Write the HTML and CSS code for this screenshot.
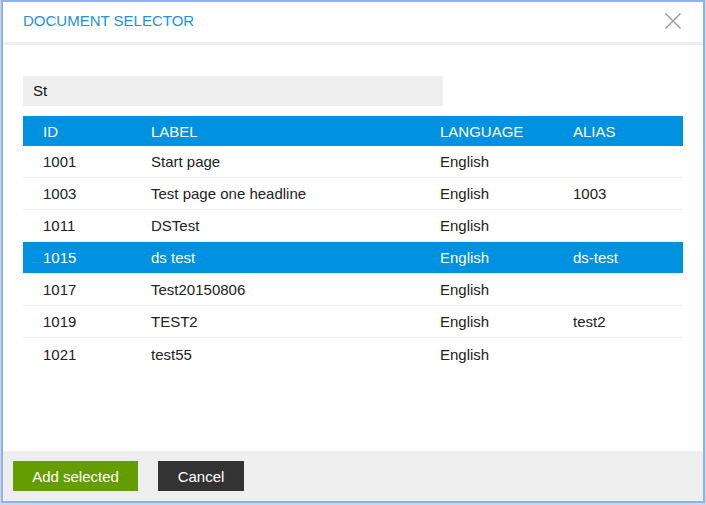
FILE: index.html
```
<!DOCTYPE html>
<html>
<head>
<meta charset="utf-8">
<link rel="stylesheet" href="styles.css">
</head>
<body>
<div class="frame">
  <div class="dialog">
    <div class="header">
      <div class="title">DOCUMENT SELECTOR</div>
      <button class="close" aria-label="Close">
        <svg width="16" height="16" viewBox="0 0 16 16"><path d="M0.5 0.5 L15.5 15.5 M15.5 0.5 L0.5 15.5" stroke="#9a9a9a" stroke-width="1.4" fill="none"/></svg>
      </button>
    </div>
    <div class="content">
      <div class="search">St</div>
      <div class="table">
        <div class="row head"><div>ID</div><div>LABEL</div><div>LANGUAGE</div><div>ALIAS</div></div>
        <div class="row"><div>1001</div><div>Start page</div><div>English</div><div></div></div>
        <div class="row"><div>1003</div><div>Test page one headline</div><div>English</div><div>1003</div></div>
        <div class="row"><div>1011</div><div>DSTest</div><div>English</div><div></div></div>
        <div class="row selected"><div>1015</div><div>ds test</div><div>English</div><div>ds-test</div></div>
        <div class="row"><div>1017</div><div>Test20150806</div><div>English</div><div></div></div>
        <div class="row"><div>1019</div><div>TEST2</div><div>English</div><div>test2</div></div>
        <div class="row last"><div>1021</div><div>test55</div><div>English</div><div></div></div>
      </div>
    </div>
    <div class="footer">
      <button class="btn add">Add selected</button>
      <button class="btn cancel">Cancel</button>
    </div>
  </div>
</div>
</body>
</html>
```
FILE: styles.css
```
html, body {
  margin: 0;
  padding: 0;
}
body {
  width: 706px;
  height: 505px;
  font-family: "Liberation Sans", Arial, sans-serif;
  font-size: 15px;
  background: #ffffff;
}
.frame {
  box-sizing: border-box;
  width: 706px;
  height: 505px;
  border-style: solid;
  border-color: #d3d6db;
  border-width: 0 1px 2px 1px;
}
.dialog {
  box-sizing: border-box;
  height: 100%;
  border: 2px solid #8fb2ee;
  background: #fff;
  display: flex;
  flex-direction: column;
}
.header {
  display: flex;
  align-items: center;
  justify-content: space-between;
  padding: 10px 22px 12px 20px;
  border-bottom: 3px solid #eeeeee;
}
.title {
  color: #1e91e2;
  line-height: 18px;
}
.close {
  border: 0;
  background: none;
  padding: 0;
  width: 16px;
  height: 16px;
  display: block;
}
.close svg { display: block; }
.content {
  flex: 1;
  padding: 31px 20px 0 20px;
}
.search {
  width: 410px;
  height: 30px;
  line-height: 30px;
  padding-left: 10px;
  background: #efefef;
  color: #111;
  margin-bottom: 10px;
}
.row {
  display: grid;
  grid-template-columns: 108px 289px 133px 1fr;
  height: 32px;
  box-sizing: border-box;
  border-bottom: 1px solid #efeff2;
  align-items: center;
  color: #222;
}
.row > div {
  padding-left: 20px;
}
.row.head {
  height: 30px;
  background: #0091e0;
  color: #fff;
  border-bottom: 0;
}
.row.selected {
  background: #0091e0;
  color: #fff;
}
.row.last {
  border-bottom: 0;
}
.footer {
  height: 50px;
  box-sizing: border-box;
  background: #eeeeee;
  padding: 10px;
  display: flex;
  gap: 20px;
}
.btn {
  border: 0;
  height: 30px;
  font-family: inherit;
  font-size: 15px;
  color: #fff;
  padding: 0;
}
.add {
  width: 125px;
  background: #659c00;
}
.cancel {
  width: 86px;
  background: #333333;
}
```
